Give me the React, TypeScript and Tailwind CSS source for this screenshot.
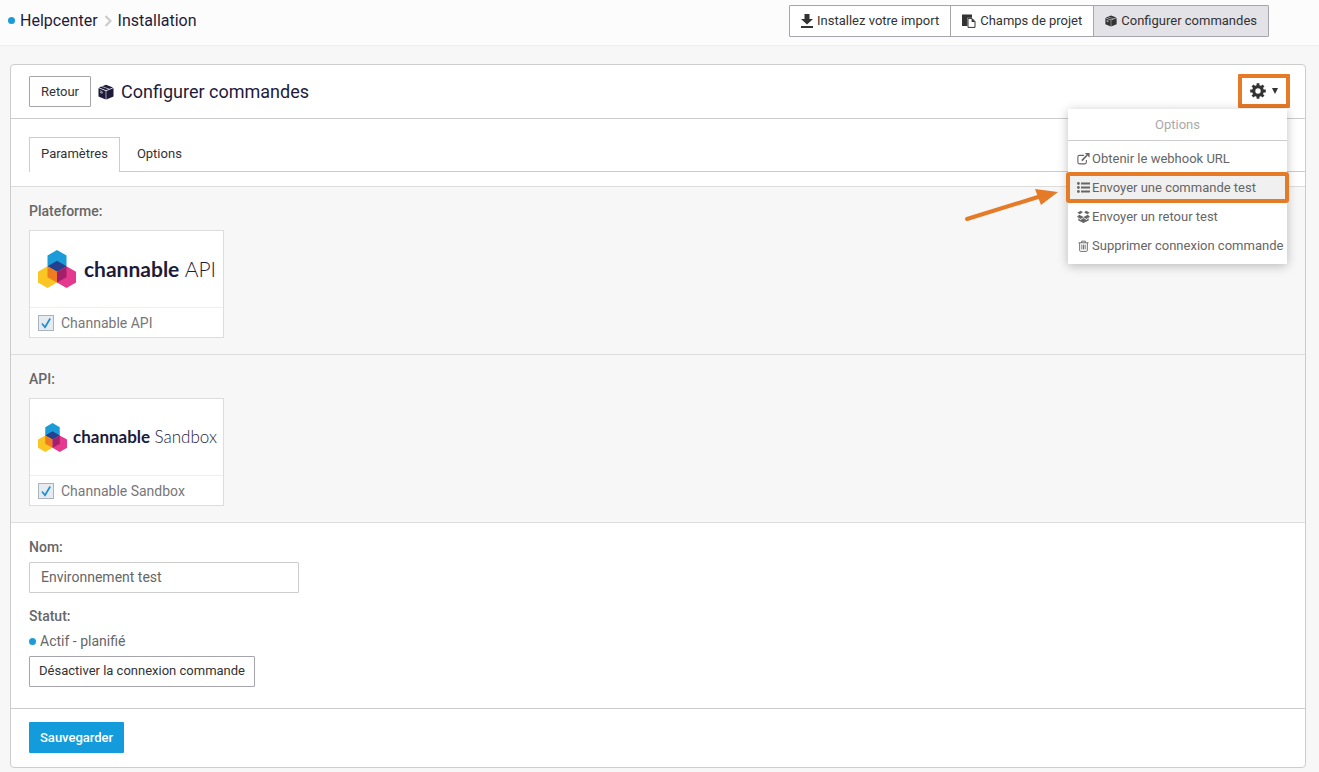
import { useState } from "react";
import type { ReactNode } from "react";
import clsx from "clsx";

type IconProps = { className?: string };

const BoxIcon = ({ className }: IconProps) => (
  <svg viewBox="0 0 16 16" className={className} fill="currentColor">
    <path d="M8 .8 15 3.4 8 6.2 1 3.4Z" />
    <path d="M.5 4.1 7.7 6.9v8.5L.5 12.4Z" />
    <path d="M15.5 4.1 8.3 6.9v8.5l7.2-3Z" />
    <path d="m3.6 2.4 7.6 2.7M2 6.8l2.2.9v1.6L2 8.4" className="fill-none stroke-white" strokeWidth=".6" />
  </svg>
);

const DownloadIcon = ({ className }: IconProps) => (
  <svg viewBox="0 0 12 14" className={className} fill="currentColor">
    <path d="M3.5 0h5v5H12L6 10.6 0 5h3.5ZM0 12h12v2H0Z" />
  </svg>
);

const PasteIcon = ({ className }: IconProps) => (
  <svg viewBox="0 0 14 14" className={className} fill="currentColor">
    <path d="M0 .6h10v3.2H5.4V12H0Z" />
    <path d="M6 4.4h4L13 7.6v5.8H6Z" fill="white" stroke="currentColor" />
    <path d="M9.6 4.2v3.9h3.8Z" />
  </svg>
);

const CogIcon = ({ className }: IconProps) => (
  <svg viewBox="0 0 16 16" className={className} fill="none" stroke="currentColor">
    <circle cx="8" cy="8" r="4.3" strokeWidth="3.2" />
    <path
      d="M8 .2v3M8 12.8v3M.2 8h3M12.8 8h3M2.5 2.5l2.1 2.1M11.4 11.4l2.1 2.1M2.5 13.5l2.1-2.1M11.4 4.6l2.1-2.1"
      strokeWidth="2.8"
    />
  </svg>
);

const ListIcon = ({ className }: IconProps) => (
  <svg viewBox="0 0 13 11" className={className} fill="currentColor">
    <circle cx="1.4" cy="1.5" r="1.4" />
    <circle cx="1.4" cy="5.5" r="1.4" />
    <circle cx="1.4" cy="9.5" r="1.4" />
    <path d="M4 .5h9v2H4ZM4 4.5h9v2H4ZM4 8.5h9v2H4Z" />
  </svg>
);

const ExternalIcon = ({ className }: IconProps) => (
  <svg viewBox="0 0 14 13" className={className} fill="none" stroke="currentColor" strokeWidth="1.2">
    <path d="M7.5 2.6H2.6Q.9 2.6.9 4.3v5.8q0 1.7 1.7 1.7h5.8q1.7 0 1.7-1.7V7.6" />
    <path d="m5.2 8.2 5.6-5.8" strokeWidth="1.8" />
    <path d="M8.4 0H13.6v5.2Z" fill="currentColor" stroke="none" />
  </svg>
);

const OpenBoxIcon = ({ className }: IconProps) => (
  <svg viewBox="0 0 14 14" className={className} fill="currentColor">
    <path d="M4 .8 6.4 2.4 3 4.5.3 3ZM10 .8 7.6 2.4 11 4.5 13.7 3Z" />
    <path d="M2.4 5 7 7.6 11.6 5 14 7.2l-3.8 2.6L7 7.9 3.8 9.8 0 7.2Z" />
    <path d="M1.4 8.8v2.6L7 13.9l5.6-2.5V8.8l-2.4 1.9L7 8.6l-3.2 2.1Z" />
  </svg>
);

const TrashIcon = ({ className }: IconProps) => (
  <svg viewBox="0 0 12 13" className={className} fill="none" stroke="currentColor">
    <path d="M.5 3h11M4 3V1.2h4V3M1.8 3v8.2q0 1.2 1.2 1.2h6q1.2 0 1.2-1.2V3M4.2 5v5.2M6 5v5.2M7.8 5v5.2" />
  </svg>
);

const LogoMark = ({ className }: IconProps) => (
  <svg viewBox="0 0 112 112" className={className}>
    <path fill="#1b9cd9" d="M56 0 84 16V48L56 64 28 48V16Z" />
    <path fill="#f9c623" d="M28 48 56 64V96L28 112 0 96V64Z" />
    <path fill="#e5398f" d="M84 48 112 64V96L84 112 56 96V64Z" />
    <path fill="#25408f" d="M56 32 84 48 56 64 28 48Z" />
    <path fill="#f07c22" d="M28 48 56 64V96L28 80Z" />
    <path fill="#a31e6b" d="M84 48 56 64V96L84 80Z" />
  </svg>
);

const navItems = [
  { label: "Installez votre import", icon: <DownloadIcon className="h-3.5 w-3" /> },
  { label: "Champs de projet", icon: <PasteIcon className="size-3.5" /> },
  { label: "Configurer commandes", icon: <BoxIcon className="size-3" />, active: true },
];

const menuItems = [
  { label: "Obtenir le webhook URL", icon: <ExternalIcon className="h-3 w-[13px]" /> },
  { label: "Envoyer une commande test", icon: <ListIcon className="h-[11px] w-[13px]" />, active: true },
  { label: "Envoyer un retour test", icon: <OpenBoxIcon className="size-[13px]" /> },
  { label: "Supprimer connexion commande", icon: <TrashIcon className="h-3 w-[11px]" /> },
];

const Button = ({ children, className }: { children: ReactNode; className?: string }) => (
  <button
    type="button"
    className={clsx("h-[31px] rounded-[1px] border border-[#a5a5ab] bg-white text-[13px] text-[#333]", className)}
  >
    {children}
  </button>
);

const Arrow = () => (
  <svg viewBox="0 0 98 40" className="absolute top-[11px] right-full mr-2 h-10 w-[98px]">
    <path d="M5 34 76 12" stroke="#e57a27" strokeWidth="4" strokeLinecap="round" />
    <path d="M73 4 96 7 79 20Z" fill="#e57a27" />
  </svg>
);

function OptionsMenu() {
  return (
    <div className="absolute top-full right-[3px] z-10 mt-px w-[219px] bg-white text-[13px] text-[#666] shadow-[0_2px_10px_rgba(0,0,0,0.25)]">
      <div className="flex h-8 items-center justify-center border-b border-[#ccc] text-[#aaa]">
        Options
      </div>
      <ul className="flex flex-col gap-0.5 pt-1 pb-[5px]">
        {menuItems.map((item) => (
          <li key={item.label} className="relative">
            {item.active && <Arrow />}
            <button
              type="button"
              className={clsx(
                "flex h-[27px] w-full items-center gap-0.5 pl-2 text-left whitespace-nowrap",
                item.active && "rounded-[1px] bg-[#f0f0f0] outline-4 -outline-offset-2 outline-[#e57a27]"
              )}
            >
              <span className="flex w-3.5 justify-center">{item.icon}</span>
              {item.label}
            </button>
          </li>
        ))}
      </ul>
    </div>
  );
}

type SectionProps = { id: string; title: string; label: string; children: ReactNode };

function PlatformSection({ id, title, label, children }: SectionProps) {
  const [checked, setChecked] = useState(true);

  return (
    <section className="border-b border-[#ddd] bg-[#f7f7f8] px-[18px] pt-3.5 pb-4">
      <h2 className="mb-[9px] text-sm font-medium text-[#666]">{title}</h2>
      <div className="w-[195px] border border-[#ddd] bg-white">
        <div className="flex h-[76px] items-center pl-2 text-[#1e1b3a]">{children}</div>
        <div className="flex h-[30px] items-center gap-[7px] border-t border-[#eee] px-2">
          <span className="grid size-4">
            <input
              id={id}
              type="checkbox"
              checked={checked}
              onChange={(e) => setChecked(e.target.checked)}
              className="col-start-1 row-start-1 size-4 appearance-none border border-[#a9b4be] bg-[#e6ebef]"
            />
            {checked && (
              <svg viewBox="0 0 16 16" className="pointer-events-none col-start-1 row-start-1 size-4">
                <path d="m4 8.5 3 3.7L12.2 3.5" fill="none" stroke="#1b8fd9" strokeWidth="1.7" />
              </svg>
            )}
          </span>
          <label htmlFor={id} className="text-sm text-[#777]">
            {label}
          </label>
        </div>
      </div>
    </section>
  );
}

export default function App() {
  return (
    <div className="min-h-screen bg-[#f7f7f8] pb-1 font-[Roboto,sans-serif] text-[#333]">
      <header className="flex h-[46px] items-start justify-between border-b border-[#eee] bg-[#fcfcfd] pt-[5px] pr-[50px] pl-2">
        <nav className="flex h-[31px] items-center text-base text-[#1e1b3a]">
          <span className="mr-[5px] size-[7px] rounded-full bg-[#1b9cd9]" />
          <a href="#helpcenter">Helpcenter</a>
          <svg viewBox="0 0 8 12" className="mx-1.5 h-3 w-2">
            <path d="m1.5 1 5 5-5 5" fill="none" stroke="#ccc" strokeWidth="2.2" />
          </svg>
          <a href="#installation">Installation</a>
        </nav>
        <div className="flex divide-x divide-[#a5a5ab] rounded-[1px] border border-[#a5a5ab] bg-white text-[13px]">
          {navItems.map((item) => (
            <button
              key={item.label}
              type="button"
              className={clsx(
                "flex h-[30px] items-center gap-1 px-[11px]",
                item.active && "bg-[#e2e2e7]"
              )}
            >
              {item.icon}
              {item.label}
            </button>
          ))}
        </div>
      </header>

      <main className="mt-[18px] mr-[13px] ml-2.5 rounded-sm border border-[#ccc] bg-white">
        <div className="flex h-[54px] items-center border-b border-[#ccc] pr-[15px] pl-[18px]">
          <Button className="px-[11px]">Retour</Button>
          <BoxIcon className="mx-[7px] size-4 text-[#1e1b3a]" />
          <h1 className="text-lg text-[#1e1b3a]">Configurer commandes</h1>
          <div className="relative mt-[9px] ml-auto self-start">
            <button
              type="button"
              aria-label="Options"
              className="flex h-[34px] w-[52px] items-center justify-center gap-1.5 rounded-[1px] border-4 border-[#e57a27] bg-white"
            >
              <CogIcon className="size-4" />
              <svg viewBox="0 0 6 6" className="size-1.5" fill="currentColor">
                <path d="M0 0h6L3 6Z" />
              </svg>
            </button>
            <OptionsMenu />
          </div>
        </div>

        <div className="border-b border-[#ddd] pt-[18px] pb-3.5">
          <div role="tablist" className="flex text-[13px]">
            <span className="w-[18px]" />
            <button
              type="button"
              role="tab"
              aria-selected="true"
              className="h-[35px] border border-b-0 border-[#ccc] px-[11px] pb-0.5"
            >
              Paramètres
            </button>
            <button
              type="button"
              role="tab"
              aria-selected="false"
              className="h-[35px] border-b border-[#ccc] px-[17px]"
            >
              Options
            </button>
            <span className="flex-1 border-b border-[#ccc]" />
          </div>
        </div>

        <PlatformSection id="platform" title="Plateforme:" label="Channable API">
          <LogoMark className="mr-2 size-[38px] shrink-0" />
          <span className="font-[Lato,sans-serif] text-[21px] whitespace-nowrap">
            <b>channable</b> <span className="font-light">API</span>
          </span>
        </PlatformSection>
        <PlatformSection id="api" title="API:" label="Channable Sandbox">
          <LogoMark className="mr-1.5 size-[29px] shrink-0" />
          <span className="font-[Lato,sans-serif] text-[17px] whitespace-nowrap">
            <b>channable</b> <span className="font-light">Sandbox</span>
          </span>
        </PlatformSection>

        <form>
          <div className="px-[18px] pt-3.5 pb-[21px] text-sm text-[#666]">
            <label htmlFor="name" className="block font-medium">
              Nom:
            </label>
            <input
              id="name"
              type="text"
              defaultValue="Environnement test"
              className="mt-[5px] block h-[31px] w-[270px] rounded-[1px] border border-[#ccc] bg-white px-[11px] pb-0.5"
            />
            <h2 className="mt-[13px] font-medium">Statut:</h2>
            <p className="mt-[5px] mb-[5px] flex items-center gap-1">
              <span className="size-[7px] rounded-full bg-[#1b9cd9]" />
              Actif - planifié
            </p>
            <Button className="px-[9px]">Désactiver la connexion commande</Button>
          </div>
          <div className="border-t border-[#ccc] px-[18px] pt-[13px] pb-3.5">
            <button
              type="button"
              className="h-[31px] rounded-[1px] bg-[#149bdb] px-[11px] text-[13px] font-medium text-white"
            >
              Sauvegarder
            </button>
          </div>
        </form>
      </main>
    </div>
  );
}
